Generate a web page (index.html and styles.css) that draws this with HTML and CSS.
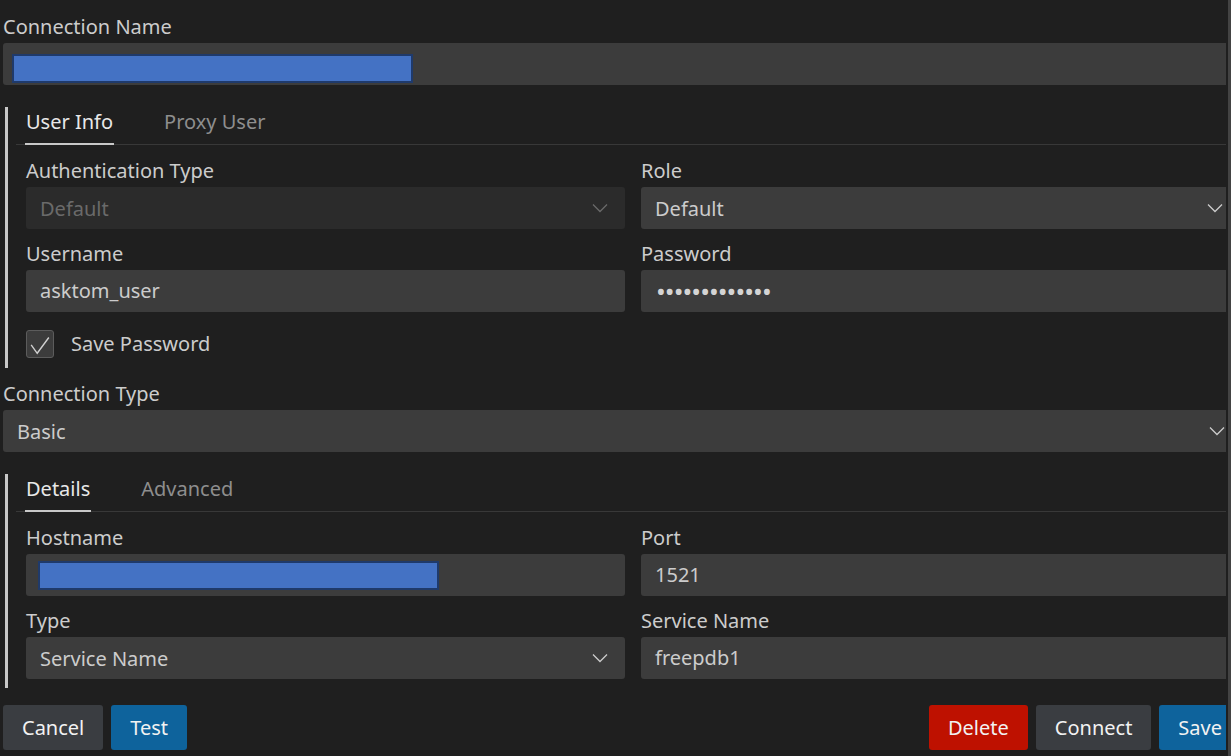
FILE: index.html
```html
<!DOCTYPE html>
<html lang="en">
<head>
<meta charset="utf-8">
<title>Connection</title>
<link rel="stylesheet" href="styles.css">
</head>
<body>
<div class="viewport">
  <form class="form">
    <div class="field">
      <span class="label">Connection Name</span>
      <div class="input"><span class="redact redact-name"></span></div>
    </div>

    <section class="group">
      <div class="tabs">
        <span class="tab active">User Info</span>
        <span class="tab">Proxy User</span>
      </div>
      <div class="grid">
        <div class="field">
          <span class="label">Authentication Type</span>
          <div class="input select disabled"><span>Default</span>
            <svg class="chev" viewBox="0 0 16 16"><path d="M1 4.5 L8 11.5 L15 4.5"/></svg></div>
        </div>
        <div class="field">
          <span class="label">Role</span>
          <div class="input select"><span>Default</span>
            <svg class="chev" viewBox="0 0 16 16"><path d="M1 4.5 L8 11.5 L15 4.5"/></svg></div>
        </div>
        <div class="field">
          <span class="label">Username</span>
          <div class="input"><span>asktom_user</span></div>
        </div>
        <div class="field">
          <span class="label">Password</span>
          <div class="input"><span class="dots">•••••••••••••</span></div>
        </div>
      </div>
      <div class="check">
        <span class="box"><svg viewBox="0 0 28 28"><path d="M4.5 15 L11 24 L23.5 7"/></svg></span>
        <span>Save Password</span>
      </div>
    </section>

    <div class="field field-type">
      <span class="label">Connection Type</span>
      <div class="input select"><span>Basic</span>
        <svg class="chev" viewBox="0 0 16 16"><path d="M1 4.5 L8 11.5 L15 4.5"/></svg></div>
    </div>

    <section class="group group-details">
      <div class="tabs">
        <span class="tab active">Details</span>
        <span class="tab">Advanced</span>
      </div>
      <div class="grid">
        <div class="field">
          <span class="label">Hostname</span>
          <div class="input"><span class="redact redact-host"></span></div>
        </div>
        <div class="field">
          <span class="label">Port</span>
          <div class="input"><span>1521</span></div>
        </div>
        <div class="field">
          <span class="label">Type</span>
          <div class="input select"><span>Service Name</span>
            <svg class="chev" viewBox="0 0 16 16"><path d="M1 4.5 L8 11.5 L15 4.5"/></svg></div>
        </div>
        <div class="field">
          <span class="label">Service Name</span>
          <div class="input"><span>freepdb1</span></div>
        </div>
      </div>
    </section>

    <div class="actions">
      <div class="btns">
        <button type="button" class="btn btn-secondary">Cancel</button>
        <button type="button" class="btn btn-primary">Test</button>
      </div>
      <div class="btns">
        <button type="button" class="btn btn-danger">Delete</button>
        <button type="button" class="btn btn-secondary">Connect</button>
        <button type="button" class="btn btn-primary btn-save">Save</button>
      </div>
    </div>
  </form>
</div>
<div class="scrollbar"></div>
</body>
</html>
```

FILE: styles.css
```css
html, body {
  margin: 0;
  padding: 0;
  background: #1f1f1f;
}
body {
  display: flex;
  width: 1231px;
  height: 756px;
  overflow: hidden;
  font-family: "Noto Sans", "Open Sans", sans-serif;
  font-size: 20px;
  color: #cccccc;
}
.viewport {
  width: 1226px;
  flex: none;
  overflow: hidden;
}
.scrollbar {
  width: 3px;
  margin-left: 2px;
  background: #434343;
  flex: none;
}
.form {
  display: block;
  width: 1242px;
  box-sizing: border-box;
  padding: 14px 0 0 3px;
  margin: 0;
}
.field {
  display: flex;
  flex-direction: column;
}
.label {
  line-height: 26px;
  height: 26px;
  margin-bottom: 3px;
  color: #cccccc;
  white-space: nowrap;
}
.input {
  height: 42px;
  box-sizing: border-box;
  background: #3c3c3c;
  border-radius: 3px;
  display: flex;
  align-items: center;
  padding: 0 14px;
  color: #cccccc;
  line-height: 26px;
  white-space: nowrap;
}
.select {
  justify-content: space-between;
  padding-right: 17px;
}
.select > span {
  padding-top: 1px;
}
.select.disabled {
  background: #2b2b2b;
  color: #6a6a6a;
}
.chev {
  width: 16px;
  height: 16px;
  fill: none;
  stroke: #cccccc;
  stroke-width: 1.3;
}
.disabled .chev {
  stroke: #6a6a6a;
}
.redact {
  display: block;
  background: #4472c4;
  border: 2px solid #1f3a6b;
  box-sizing: border-box;
}
.redact-name {
  width: 401px;
  height: 29px;
  margin: 8px 0 0 -5px;
}
.redact-host {
  width: 401px;
  height: 29px;
  margin: 0 0 0 -2px;
}
.dots {
  font-size: 26px;
  line-height: 26px;
  letter-spacing: -0.95px;
  margin-left: 1px;
  color: #d4d4d4;
}
.group {
  margin: 22px 0 0 2px;
  border-left: 3px solid #c8c8c8;
  padding: 0 0 9px 8px;
}
.tabs {
  display: flex;
  gap: 50px;
  padding-left: 9px;
  border-bottom: 1px solid #383838;
}
.tab {
  padding: 2px 0 8px;
  line-height: 26px;
  border-bottom: 2px solid transparent;
  margin-bottom: -1px;
  color: #8e8e8e;
}
.tab.active {
  color: #e8e8e8;
  border-bottom-color: #c8c8c8;
  padding-left: 1px;
  padding-right: 1px;
}
.grid {
  display: grid;
  grid-template-columns: 599px 599px;
  column-gap: 16px;
  row-gap: 12px;
  margin-top: 13px;
  padding-left: 10px;
}
.check {
  display: flex;
  align-items: center;
  gap: 17px;
  margin: 18px 0 1px 10px;
  line-height: 28px;
}
.box {
  width: 28px;
  height: 28px;
  box-sizing: border-box;
  border: 1px solid #5c5c5c;
  border-radius: 3px;
  background: #3c3c3c;
  display: flex;
}
.box svg {
  width: 26px;
  height: 26px;
  fill: none;
  stroke: #d0d0d0;
  stroke-width: 1.5;
}
.field-type {
  margin-top: 13px;
}
.group-details {
  margin-top: 22px;
}
.actions {
  display: flex;
  justify-content: space-between;
  margin-top: 17px;
}
.btns {
  display: flex;
  gap: 8px;
}
.btn {
  height: 45px;
  padding: 0 19px;
  border: none;
  border-radius: 3px;
  font-family: inherit;
  font-size: 20px;
  color: #f2f2f2;
  line-height: 45px;
}
.btn-secondary {
  background: #3a3d41;
}
.btn-primary {
  background: #0e639c;
}
.btn-danger {
  background: #be1100;
}
.btn-save {
  padding: 0 20px 0 19px;
}
```
